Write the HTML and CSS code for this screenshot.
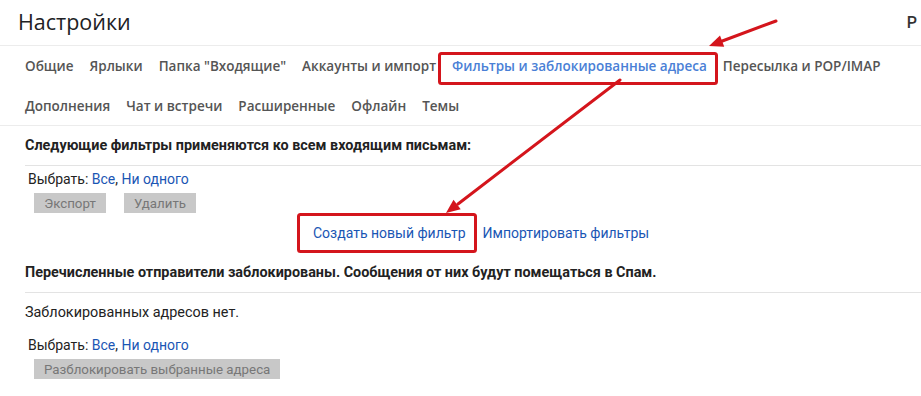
FILE: index.html
```html
<!DOCTYPE html>
<html lang="ru">
<head>
    <meta charset="UTF-8">
    <meta name="viewport" content="width=device-width, initial-scale=1.0">
    <title>Настройки</title>
    <link rel="stylesheet" href="styles.css">
</head>
<body>
    <div class="page">
        <div class="header">
            <h1>Настройки</h1>
            <span class="lang">Р</span>
        </div>

        <div class="tabs">
            <div class="tab-row">
                <span class="tab">Общие</span>
                <span class="tab">Ярлыки</span>
                <span class="tab">Папка "Входящие"</span>
                <span class="tab">Аккаунты и импорт</span>
                <span class="tab active">Фильтры и заблокированные адреса</span>
                <span class="tab">Пересылка и POP/IMAP</span>
            </div>
            <div class="tab-row">
                <span class="tab">Дополнения</span>
                <span class="tab">Чат и встречи</span>
                <span class="tab">Расширенные</span>
                <span class="tab">Офлайн</span>
                <span class="tab">Темы</span>
            </div>
        </div>

        <!-- Filters -->
        <div class="section">
            <div class="section-title">Следующие фильтры применяются ко всем входящим письмам:</div>
            <div class="select-line">Выбрать: <a href="#">Все</a>, <a href="#">Ни одного</a></div>
            <div class="buttons">
                <button class="btn" disabled>Экспорт</button>
                <button class="btn" disabled>Удалить</button>
            </div>
            <div class="filter-links">
                <a href="#">Создать новый фильтр</a>
                <a href="#">Импортировать фильтры</a>
            </div>
        </div>

        <!-- Blocked addresses -->
        <div class="section">
            <div class="section-title">Перечисленные отправители заблокированы. Сообщения от них будут помещаться в Спам.</div>
            <div class="empty">Заблокированных адресов нет.</div>
            <div class="select-line">Выбрать: <a href="#">Все</a>, <a href="#">Ни одного</a></div>
            <div class="buttons">
                <button class="btn" disabled>Разблокировать выбранные адреса</button>
            </div>
        </div>

        <!-- annotation overlay -->
        <svg class="marks" width="921" height="396" viewBox="0 0 921 396">
            <rect x="439.5" y="53.5" width="277" height="30" rx="2" fill="none" stroke="#d4151c" stroke-width="3"/>
            <rect x="298.5" y="214.5" width="177" height="37" rx="2" fill="none" stroke="#d4151c" stroke-width="3"/>
            <line x1="776" y1="21" x2="721" y2="41.5" stroke="#d4151c" stroke-width="3" stroke-linecap="round"/>
            <polygon points="709,46 724.2,46.7 720,35.5" fill="#d4151c"/>
            <line x1="620" y1="80" x2="458" y2="204" stroke="#d4151c" stroke-width="3" stroke-linecap="round"/>
            <polygon points="446,213 460.7,209.3 453.5,199.7" fill="#d4151c"/>
        </svg>
    </div>
</body>
</html>
```

FILE: styles.css
```css
* {
    margin: 0;
    padding: 0;
    box-sizing: border-box;
}
body {
    background: #fff;
    color: #222;
    font-family: Roboto, "Liberation Sans", Arial, sans-serif;
    font-size: 14px;
    overflow: hidden;
}
.page {
    position: relative;
    width: 921px;
    height: 396px;
}
.header {
    display: flex;
    align-items: center;
    justify-content: space-between;
    height: 46px;
    padding: 0 4px 0 18px;
    border-bottom: 1px solid #ececec;
}
.header h1 {
    font-family: "Open Sans", Roboto, sans-serif;
    font-weight: 400;
    font-size: 21.5px;
    color: #202124;
    margin-top: -2px;
}
.lang {
    font-weight: 500;
    font-size: 16px;
    color: #333;
}
.tabs {
    padding-left: 17px;
    border-bottom: 1px solid #ececec;
    height: 80px;
}
.tab-row {
    display: flex;
    height: 40px;
    align-items: center;
    white-space: nowrap;
}
.tab {
    padding: 0 8px;
    font-family: "Open Sans", Roboto, sans-serif;
    font-weight: 600;
    font-size: 13.5px;
    color: #555;
}
.tab.active {
    color: #4a7fd6;
}
.section {
    padding-left: 25px;
}
.section-title {
    height: 40px;
    line-height: 40px;
    font-weight: 700;
    font-size: 14.4px;
    color: #222;
    border-bottom: 1px solid #e3e3e3;
    white-space: nowrap;
}
a {
    color: #1a56b4;
    text-decoration: none;
}
.select-line {
    padding-left: 3px;
    height: 27px;
    line-height: 27px;
}
.buttons {
    display: flex;
    gap: 18px;
    padding-left: 9px;
}
.btn {
    height: 20px;
    padding: 0 10px;
    border: none;
    background: #c8c8c8;
    color: #777;
    font-family: Roboto, sans-serif;
    font-size: 13.3px;
    min-width: 72px;
}
.filter-links {
    display: flex;
    gap: 17px;
    padding-left: 288px;
    height: 40px;
    align-items: center;
}
.empty {
    height: 39px;
    line-height: 40px;
    font-size: 14.4px;
}
.marks {
    position: absolute;
    left: 0;
    top: 0;
    pointer-events: none;
}
```
